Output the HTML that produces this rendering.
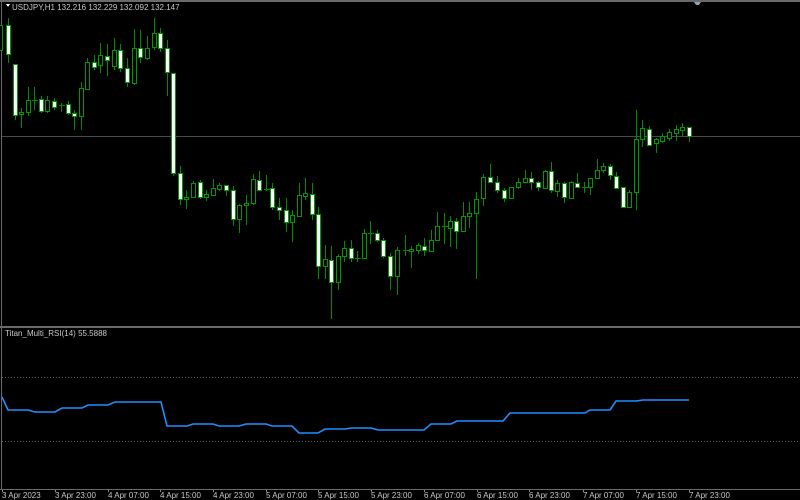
<!DOCTYPE html>
<html><head><meta charset="utf-8"><style>
html,body{margin:0;padding:0;background:#000;width:800px;height:500px;overflow:hidden}
svg{display:block}
text{font-family:"Liberation Sans",sans-serif;font-size:8px;fill:#c8c8c8}
</style></head><body>
<svg width="800" height="500" viewBox="0 0 800 500" shape-rendering="crispEdges">
<rect width="800" height="500" fill="#000"/>
<rect x="0" y="0" width="800" height="2" fill="#6a6a6a"/>
<rect x="1" y="0" width="1" height="490" fill="#6a6a6a"/>
<rect x="0" y="326" width="800" height="2" fill="#6a6a6a"/>
<rect x="0" y="489" width="800" height="1" fill="#6a6a6a"/>
<path d="M694 2h7l-2 3h-3z" fill="#8aa0b4"/>
<rect x="2" y="136" width="798" height="1" fill="#4a4a4a"/>
<line x1="2" y1="377.5" x2="800" y2="377.5" stroke="#5a5a5a" stroke-dasharray="1,2"/>
<line x1="2" y1="441.5" x2="800" y2="441.5" stroke="#5a5a5a" stroke-dasharray="1,2"/>
<path fill="#fff" d="M6 4l4 0-2 3z"/>
<text x="12" y="10">USDJPY,H1  132.216 132.229 132.092 132.147</text>
<text x="5" y="336">Titan_Multi_RSI(14) 55.5888</text>
<g stroke="#008c00" stroke-width="1" fill="none">
<path d="M8.5 18V63M15.5 64V120M21.5 108V128M28.5 87V116M34.5 87V110M41.5 96V113M47.5 96V113M54.5 98V110M61.5 103V112M68.5 101V115M74.5 110V130M81.5 82V130M87.5 58V90M94.5 55V70M100.5 43V73M107.5 44V76M114.5 38V70M120.5 44V72M127.5 58V87M134.5 29V85M140.5 30V63M147.5 36V60M154.5 18V50M160.5 28V52M167.5 40V96M173.5 73V176M180.5 166V205M186.5 190V209M193.5 181V198M200.5 180V199M206.5 190V201M213.5 179V196M219.5 183V191M226.5 185V196M233.5 186V226M239.5 204V233M246.5 195V225M253.5 174V205M259.5 171V191M266.5 175V191M272.5 183V210M279.5 198V220M286.5 198V232M292.5 210V242M299.5 183V217M305.5 178V200M312.5 183V220M318.5 207V279M325.5 245V279M331.5 246V319M338.5 254V290M344.5 241V262M351.5 240V262M357.5 251V262M364.5 229V258M370.5 221V244M377.5 230V242M383.5 238V258M390.5 253V290M397.5 247V295M405.5 235V256M411.5 246V268M418.5 243V254M424.5 238V256M431.5 230V252M437.5 212V241M444.5 213V244M450.5 216V247M456.5 218V249M463.5 202V232M469.5 202V228M476.5 192V279M483.5 174V206M490.5 164V183M497.5 176V193M504.5 188V202M511.5 187V199M518.5 178V189M525.5 170V182M531.5 172V190M538.5 181V191M545.5 170V188M551.5 162V193M557.5 180V197M564.5 182V203M571.5 181V199M577.5 173V188M584.5 182V193M590.5 178V195M597.5 159V179M603.5 163V173M610.5 164V180M616.5 172V189M623.5 187V208M629.5 190V208M636.5 110V210M642.5 120V147M649.5 126V146M656.5 138V153M662.5 133V143M669.5 129V141M676.5 125V141M682.5 123V136M689.5 127V142"/>
<path d="M32 100.5h6M59 105.5h6M264 189.5h6M355 258.5h6M368 233.5h6M403 250.5h6M442 226.5h6M582 187.5h6"/>
</g>
<g stroke="#009a00" stroke-width="1">
<g fill="#000">
<rect x="-1.5" y="25.5" width="4" height="25"/>
<rect x="19.5" y="112.5" width="4" height="2"/>
<rect x="26.5" y="100.5" width="4" height="12"/>
<rect x="45.5" y="100.5" width="4" height="11"/>
<rect x="79.5" y="88.5" width="4" height="28"/>
<rect x="85.5" y="62.5" width="4" height="27"/>
<rect x="98.5" y="55.5" width="4" height="10"/>
<rect x="112.5" y="50.5" width="4" height="16"/>
<rect x="132.5" y="48.5" width="4" height="35"/>
<rect x="145.5" y="48.5" width="4" height="10"/>
<rect x="152.5" y="33.5" width="4" height="14"/>
<rect x="184.5" y="197.5" width="4" height="2"/>
<rect x="191.5" y="183.5" width="4" height="14"/>
<rect x="204.5" y="194.5" width="4" height="3"/>
<rect x="211.5" y="188.5" width="4" height="7"/>
<rect x="217.5" y="185.5" width="4" height="4"/>
<rect x="237.5" y="205.5" width="4" height="14"/>
<rect x="244.5" y="203.5" width="4" height="2"/>
<rect x="251.5" y="179.5" width="4" height="24"/>
<rect x="290.5" y="215.5" width="4" height="7"/>
<rect x="297.5" y="195.5" width="4" height="21"/>
<rect x="303.5" y="193.5" width="4" height="3"/>
<rect x="323.5" y="259.5" width="4" height="7"/>
<rect x="336.5" y="256.5" width="4" height="26"/>
<rect x="342.5" y="248.5" width="4" height="8"/>
<rect x="362.5" y="233.5" width="4" height="25"/>
<rect x="395.5" y="250.5" width="4" height="26"/>
<rect x="409.5" y="249.5" width="4" height="2"/>
<rect x="416.5" y="245.5" width="4" height="5"/>
<rect x="429.5" y="240.5" width="4" height="11"/>
<rect x="435.5" y="226.5" width="4" height="14"/>
<rect x="448.5" y="221.5" width="4" height="7"/>
<rect x="461.5" y="216.5" width="4" height="15"/>
<rect x="467.5" y="213.5" width="4" height="3"/>
<rect x="474.5" y="199.5" width="4" height="14"/>
<rect x="481.5" y="177.5" width="4" height="21"/>
<rect x="509.5" y="187.5" width="4" height="11"/>
<rect x="516.5" y="182.5" width="4" height="5"/>
<rect x="523.5" y="178.5" width="4" height="4"/>
<rect x="543.5" y="171.5" width="4" height="17"/>
<rect x="555.5" y="183.5" width="4" height="8"/>
<rect x="569.5" y="182.5" width="4" height="16"/>
<rect x="588.5" y="178.5" width="4" height="9"/>
<rect x="595.5" y="170.5" width="4" height="8"/>
<rect x="601.5" y="166.5" width="4" height="4"/>
<rect x="627.5" y="192.5" width="4" height="15"/>
<rect x="634.5" y="139.5" width="4" height="53"/>
<rect x="640.5" y="128.5" width="4" height="11"/>
<rect x="654.5" y="139.5" width="4" height="4"/>
<rect x="660.5" y="136.5" width="4" height="5"/>
<rect x="667.5" y="132.5" width="4" height="6"/>
<rect x="674.5" y="129.5" width="4" height="4"/>
<rect x="680.5" y="127.5" width="4" height="3"/>
</g>
<g fill="#fff">
<rect x="6.5" y="25.5" width="4" height="29"/>
<rect x="13.5" y="64.5" width="4" height="51"/>
<rect x="39.5" y="99.5" width="4" height="12"/>
<rect x="52.5" y="101.5" width="4" height="6"/>
<rect x="66.5" y="104.5" width="4" height="9"/>
<rect x="72.5" y="113.5" width="4" height="3"/>
<rect x="92.5" y="62.5" width="4" height="5"/>
<rect x="105.5" y="56.5" width="4" height="4"/>
<rect x="118.5" y="50.5" width="4" height="18"/>
<rect x="125.5" y="68.5" width="4" height="14"/>
<rect x="138.5" y="48.5" width="4" height="9"/>
<rect x="158.5" y="33.5" width="4" height="15"/>
<rect x="165.5" y="48.5" width="4" height="24"/>
<rect x="171.5" y="73.5" width="4" height="100"/>
<rect x="178.5" y="173.5" width="4" height="26"/>
<rect x="198.5" y="182.5" width="4" height="15"/>
<rect x="224.5" y="185.5" width="4" height="5"/>
<rect x="231.5" y="190.5" width="4" height="29"/>
<rect x="257.5" y="180.5" width="4" height="10"/>
<rect x="270.5" y="188.5" width="4" height="19"/>
<rect x="277.5" y="207.5" width="4" height="3"/>
<rect x="284.5" y="210.5" width="4" height="12"/>
<rect x="310.5" y="194.5" width="4" height="20"/>
<rect x="316.5" y="214.5" width="4" height="52"/>
<rect x="329.5" y="260.5" width="4" height="22"/>
<rect x="349.5" y="248.5" width="4" height="10"/>
<rect x="375.5" y="233.5" width="4" height="7"/>
<rect x="381.5" y="240.5" width="4" height="16"/>
<rect x="388.5" y="256.5" width="4" height="20"/>
<rect x="422.5" y="246.5" width="4" height="4"/>
<rect x="454.5" y="221.5" width="4" height="10"/>
<rect x="488.5" y="177.5" width="4" height="5"/>
<rect x="495.5" y="182.5" width="4" height="8"/>
<rect x="502.5" y="190.5" width="4" height="8"/>
<rect x="529.5" y="178.5" width="4" height="4"/>
<rect x="536.5" y="182.5" width="4" height="5"/>
<rect x="549.5" y="171.5" width="4" height="19"/>
<rect x="562.5" y="183.5" width="4" height="14"/>
<rect x="575.5" y="183.5" width="4" height="4"/>
<rect x="608.5" y="166.5" width="4" height="9"/>
<rect x="614.5" y="176.5" width="4" height="12"/>
<rect x="621.5" y="187.5" width="4" height="20"/>
<rect x="647.5" y="129.5" width="4" height="16"/>
<rect x="687.5" y="127.5" width="4" height="9"/>
</g>
</g>
<polyline shape-rendering="auto" fill="none" stroke="#1e90ff" stroke-width="1.6" points="2,397 8,410 28,410 35,412 55,412 62,408 82,408 88,405 108,405 115,402 161,402 167,426 187,426 193,424 213,424 219,426 239,426 246,424 266,424 272,426 292,426 299,433 318,433 325,429 345,429 351,428 371,428 378,430 424,430 431,424 451,424 457,421 503,421 510,413 585,413 590,410 610,410 616,401 636,401 643,400 689,400"/>
<g fill="#8a8a8a">
<rect x="2" y="490" width="1" height="2"/><rect x="55" y="490" width="1" height="2"/><rect x="108" y="490" width="1" height="2"/><rect x="160" y="490" width="1" height="2"/><rect x="213" y="490" width="1" height="2"/><rect x="266" y="490" width="1" height="2"/><rect x="318" y="490" width="1" height="2"/><rect x="371" y="490" width="1" height="2"/><rect x="424" y="490" width="1" height="2"/><rect x="477" y="490" width="1" height="2"/><rect x="529" y="490" width="1" height="2"/><rect x="583" y="490" width="1" height="2"/><rect x="636" y="490" width="1" height="2"/><rect x="689" y="490" width="1" height="2"/>
</g>
<text x="2" y="498">3 Apr 2023</text>
<text x="55" y="498">3 Apr 23:00</text>
<text x="108" y="498">4 Apr 07:00</text>
<text x="160" y="498">4 Apr 15:00</text>
<text x="213" y="498">4 Apr 23:00</text>
<text x="266" y="498">5 Apr 07:00</text>
<text x="318" y="498">5 Apr 15:00</text>
<text x="371" y="498">5 Apr 23:00</text>
<text x="424" y="498">6 Apr 07:00</text>
<text x="477" y="498">6 Apr 15:00</text>
<text x="529" y="498">6 Apr 23:00</text>
<text x="583" y="498">7 Apr 07:00</text>
<text x="636" y="498">7 Apr 15:00</text>
<text x="689" y="498">7 Apr 23:00</text>
</svg>
</body></html>
